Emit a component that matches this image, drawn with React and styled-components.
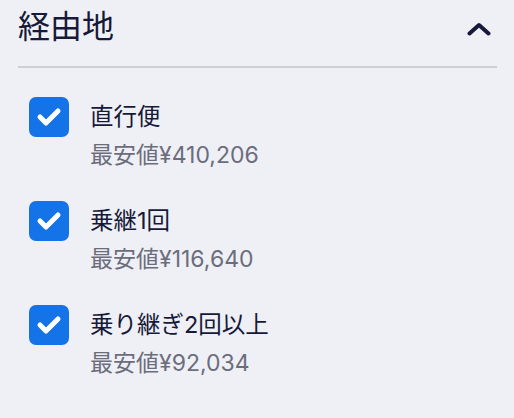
import React from "react";
import styled, { createGlobalStyle } from "styled-components";

const GlobalStyle = createGlobalStyle`
  body {
    margin: 0;
    background: #eff0f6;
    font-family: Inter, "Noto Sans CJK JP", sans-serif;
    color: #161938;
  }
`;

const Panel = styled.section`
  padding: 0 17px 0 18px;
  width: 479px;
`;

const Header = styled.div`
  display: flex;
  align-items: center;
  justify-content: space-between;
  height: 54px;
  padding-bottom: 12px;
  border-bottom: 2px solid #cdcfd7;
`;

const Title = styled.h2`
  margin: 0;
  font-size: 32px;
  font-weight: 400;
  line-height: 42px;
  color: #161938;
`;

const Toggle = styled.button`
  border: 0;
  background: none;
  padding: 0;
  margin-right: 6px;
  margin-top: 4px;
  display: flex;
  cursor: pointer;
`;

const List = styled.ul`
  list-style: none;
  margin: 0;
  padding: 29px 0 0 11px;
  display: flex;
  flex-direction: column;
  gap: 28px;
`;

const Item = styled.li`
  display: flex;
  gap: 21px;
  align-items: flex-start;
`;

const Box = styled.span`
  width: 40px;
  height: 40px;
  border-radius: 7px;
  background: #1473e6;
  display: flex;
  flex-shrink: 0;
`;

const Texts = styled.div`
  display: flex;
  flex-direction: column;
`;

const Label = styled.span`
  font-size: 23.5px;
  line-height: 40px;
  color: #161938;
`;

const Price = styled.span`
  font-size: 23px;
  line-height: 36px;
  color: #6b6d7c;
`;

const Check = () => (
  <svg width="40" height="40" viewBox="0 0 40 40" fill="none">
    <path d="M11 20 L17 26 L29 14" stroke="#fff" strokeWidth="5" strokeLinecap="round" strokeLinejoin="round" />
  </svg>
);

const Chevron = () => (
  <svg width="24" height="14" viewBox="0 0 24 14" fill="none">
    <path d="M2.5 11.5 L12 3 L21.5 11.5" stroke="#161938" strokeWidth="4" strokeLinecap="round" strokeLinejoin="round" />
  </svg>
);

const items = [
  { label: "直行便", price: "¥410,206" },
  { label: "乗継1回", price: "¥116,640" },
  { label: "乗り継ぎ2回以上", price: "¥92,034" },
];

export default function App() {
  return (
    <>
      <GlobalStyle />
      <Panel>
        <Header>
          <Title>経由地</Title>
          <Toggle aria-label="閉じる">
            <Chevron />
          </Toggle>
        </Header>
        <List>
          {items.map((it) => (
            <Item key={it.label}>
              <Box>
                <Check />
              </Box>
              <Texts>
                <Label>{it.label}</Label>
                <Price>最安値{it.price}</Price>
              </Texts>
            </Item>
          ))}
        </List>
      </Panel>
    </>
  );
}
